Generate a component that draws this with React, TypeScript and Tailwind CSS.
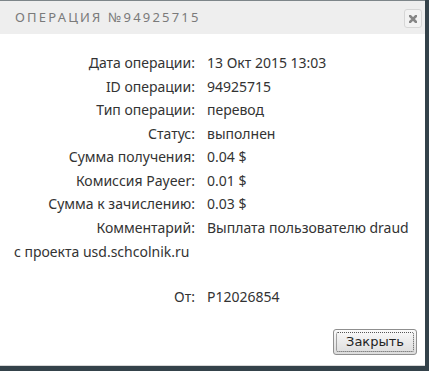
import React from "react"

const rows: [string, string][] = [
    ["Дата операции:", "13 Окт 2015 13:03"],
    ["ID операции:", "94925715"],
    ["Тип операции:", "перевод"],
    ["Статус:", "выполнен"],
    ["Сумма получения:", "0.04 $"],
    ["Комиссия Payeer:", "0.01 $"],
    ["Сумма к зачислению:", "0.03 $"],
    ["Комментарий:", "Выплата пользователю draud"],
]

export default function App() {
    return (
        <div className="w-[429px] h-[371px] bg-[#34424a] overflow-hidden">
            <div className="w-[425px] h-[366px] bg-white border-t border-[#7d8589] border-b border-b-[#d8d8d8] flex flex-col">
                {/* header */}
                <div className="h-[33px] bg-[#eeeeee] flex items-center justify-between pl-[15px] pr-[3px] shrink-0">
                    <span
                        className="text-[13px] tracking-[2.2px] text-[#7a7a7a] uppercase"
                        style={{ fontFamily: '"Noto Sans", sans-serif' }}
                    >
                        Операция №94925715
                    </span>
                    <button className="w-[18px] h-[19px] mt-[2px] rounded-[3px] border border-[#d6d6d6] bg-[#f2f2f2] flex items-center justify-center">
                        <svg width="8" height="8" viewBox="0 0 8 8">
                            <path d="M1 1L7 7M7 1L1 7" stroke="#858585" strokeWidth="2.6" strokeLinecap="square" />
                        </svg>
                    </button>
                </div>

                {/* body */}
                <div
                    className="flex-1 pt-[17px] text-[14px] text-[#333]"
                    style={{ fontFamily: '"Noto Sans", sans-serif' }}
                >
                    <div className="grid grid-cols-[195px_1fr] gap-x-[12px]">
                        {rows.map(([label, value]) => (
                            <React.Fragment key={label}>
                                <div className="h-[23.5px] leading-[23.5px] text-right whitespace-nowrap">{label}</div>
                                <div className="h-[23.5px] leading-[23.5px] whitespace-nowrap">{value}</div>
                            </React.Fragment>
                        ))}
                    </div>
                    <div className="h-[25px] leading-[25px] pl-[14px]">с проекта usd.schcolnik.ru</div>
                    <div className="grid grid-cols-[195px_1fr] gap-x-[12px] mt-[21px]">
                        <div className="h-[24px] leading-[24px] text-right">От:</div>
                        <div className="h-[24px] leading-[24px]">P12026854</div>
                    </div>
                    <div className="flex justify-end pr-[8px] mt-[20px]">
                        <button
                            className="w-[84px] h-[26px] rounded-[3px] border border-[#8f8f8f] bg-gradient-to-b from-[#fafafa] to-[#dcdcdc] p-[2px]"
                            style={{ fontFamily: '"DejaVu Sans", sans-serif' }}
                        >
                            <span className="flex items-center justify-center w-full h-full border border-dotted border-[#555] rounded-[2px] text-[13px] text-[#222]">
                                Закрыть
                            </span>
                        </button>
                    </div>
                </div>
            </div>
        </div>
    )
}
